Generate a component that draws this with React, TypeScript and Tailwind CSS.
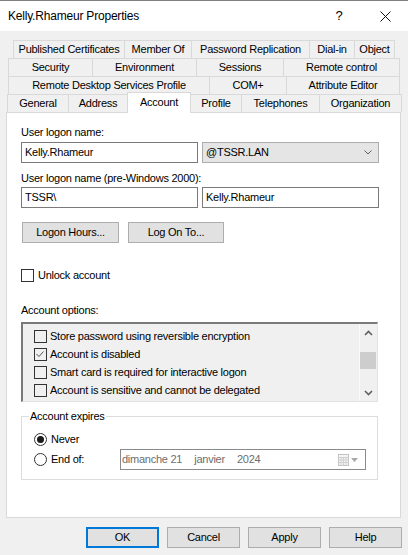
import React from "react";

type Tab = { label: string; w: string; selected?: boolean };

const tabRows: { ml: string; tabs: Tab[] }[] = [
  {
    ml: "ml-[13px]",
    tabs: [
      { label: "Published Certificates", w: "w-[111px]" },
      { label: "Member Of", w: "w-[67px]" },
      { label: "Password Replication", w: "w-[118px]" },
      { label: "Dial-in", w: "w-[45px]" },
      { label: "Object", w: "w-[41px]" },
    ],
  },
  {
    ml: "ml-[8px]",
    tabs: [
      { label: "Security", w: "w-[84px]" },
      { label: "Environment", w: "w-[104px]" },
      { label: "Sessions", w: "w-[87px]" },
      { label: "Remote control", w: "w-[117px]" },
    ],
  },
  {
    ml: "ml-[8px]",
    tabs: [
      { label: "Remote Desktop Services Profile", w: "w-[201px]" },
      { label: "COM+", w: "w-[77px]" },
      { label: "Attribute Editor", w: "w-[114px]" },
    ],
  },
];

const bottomTabs: Tab[] = [
  { label: "General", w: "w-[61px]" },
  { label: "Address", w: "w-[59px]" },
  { label: "Account", w: "w-[64px]", selected: true },
  { label: "Profile", w: "w-[50px]" },
  { label: "Telephones", w: "w-[78px]" },
  { label: "Organization", w: "w-[83px]" },
];

const options = [
  { label: "Store password using reversible encryption", checked: false },
  { label: "Account is disabled", checked: true },
  { label: "Smart card is required for interactive logon", checked: false },
  { label: "Account is sensitive and cannot be delegated", checked: false },
];

function Checkbox({ checked = false }: { checked?: boolean }) {
  return (
    <div className="flex h-[13px] w-[13px] shrink-0 items-center justify-center border border-[#333333]">
      {checked && (
        <svg width="11" height="11" viewBox="0 0 11 11">
          <polyline points="1.5,5 4,7.5 8.5,2.5" fill="none" stroke="#555555" strokeWidth="1" />
        </svg>
      )}
    </div>
  );
}

function Radio({ checked = false }: { checked?: boolean }) {
  return (
    <div className="flex h-[13px] w-[13px] shrink-0 items-center justify-center rounded-full border border-[#333333] bg-white">
      {checked && <div className="h-[7px] w-[7px] rounded-full bg-[#1a1a1a]" />}
    </div>
  );
}

function Chevron({ up = false }: { up?: boolean }) {
  return (
    <svg width="9" height="6" viewBox="0 0 9 6">
      <polyline
        points={up ? "1,5 4.5,1.5 8,5" : "1,1 4.5,4.5 8,1"}
        fill="none"
        stroke="#606060"
        strokeWidth="1.6"
      />
    </svg>
  );
}

export default function App() {
  return (
    <div className="h-[555px] w-[408px] overflow-hidden bg-[#f0f0f0] font-['Liberation_Sans',Arial,sans-serif] text-[11px] tracking-[-0.25px] text-black">
      {/* title bar */}
      <div className="flex h-[31px] items-center border-t border-[#808080] bg-white">
        <span className="flex-1 pl-[8px] text-[12px] tracking-[-0.2px]">Kelly.Rhameur Properties</span>
        <div className="flex h-full w-[46px] items-center justify-center text-[13px]">?</div>
        <div className="flex h-full w-[46px] items-center justify-center">
          <svg width="11" height="11" viewBox="0 0 11 11">
            <path d="M0.5 0.5 L10.5 10.5 M10.5 0.5 L0.5 10.5" stroke="#111111" strokeWidth="1" />
          </svg>
        </div>
      </div>

      {/* tabs */}
      <div className="mt-[9px]">
        {tabRows.map((row, i) => (
          <div key={i} className={`flex ${row.ml}`}>
            {row.tabs.map((t, j) => (
              <div
                key={t.label}
                className={`${t.w} h-[18px] border-t border-l border-[#d9d9d9] text-center leading-[17px] ${
                  j === row.tabs.length - 1 ? "border-r" : ""
                }`}
              >
                {t.label}
              </div>
            ))}
          </div>
        ))}
        <div className="flex h-[18px] items-end ml-[7px]">
          {bottomTabs.map((t, j) => {
            if (t.selected) {
              return (
                <div
                  key={t.label}
                  className={`${t.w} relative z-10 -mb-px h-[21px] border-t border-l border-r border-[#d9d9d9] bg-white text-center leading-[18px]`}
                >
                  {t.label}
                </div>
              );
            }
            const afterSelected = bottomTabs[j - 1]?.selected;
            return (
              <div
                key={t.label}
                className={`${t.w} h-[18px] border-t border-[#d9d9d9] text-center leading-[17px] ${
                  afterSelected ? "" : "border-l"
                } ${j === bottomTabs.length - 1 ? "border-r" : ""}`}
              >
                {t.label}
              </div>
            );
          })}
        </div>
      </div>

      {/* panel */}
      <div className="ml-[6px] h-[406px] w-[395px] border border-[#d9d9d9] bg-white pl-[14px]">
        <div className="mt-[13px] h-[13px] leading-[13px]">User logon name:</div>
        <div className="mt-[3px] flex gap-[4px]">
          <div className="h-[21px] w-[177px] border border-[#7a7a7a] pl-[3px] leading-[19px]">Kelly.Rhameur</div>
          <div className="flex h-[21px] w-[177px] items-center justify-between border border-[#adadad] bg-[#e5e5e5] pl-[3px] pr-[6px]">
            <span>@TSSR.LAN</span>
            <svg width="8" height="5" viewBox="0 0 8 5">
              <polyline points="0.5,0.5 4,4 7.5,0.5" fill="none" stroke="#606060" strokeWidth="1" />
            </svg>
          </div>
        </div>
        <div className="mt-[9px] h-[13px] leading-[13px]">User logon name (pre-Windows 2000):</div>
        <div className="mt-[2px] flex gap-[4px]">
          <div className="h-[21px] w-[177px] border border-[#7a7a7a] pl-[3px] leading-[19px]">TSSR\</div>
          <div className="h-[21px] w-[177px] border border-[#7a7a7a] pl-[3px] leading-[19px]">Kelly.Rhameur</div>
        </div>
        <div className="ml-px mt-[14px] flex gap-[9px]">
          <div className="h-[21px] w-[97px] border border-[#adadad] bg-[#e1e1e1] text-center leading-[19px]">Logon Hours...</div>
          <div className="h-[21px] w-[96px] border border-[#adadad] bg-[#e1e1e1] text-center leading-[19px]">Log On To...</div>
        </div>

        <div className="mt-[26px] flex h-[13px] items-center gap-[4px] bg-white">
          <Checkbox />
          <span className="leading-[13px]">Unlock account</span>
        </div>

        <div className="mt-[22px] h-[13px] leading-[13px]">Account options:</div>
        <div className="mt-[5px] flex h-[80px] w-[357px] border-t-2 border-l-2 border-r border-b border-t-[#7a7a7a] border-l-[#7a7a7a] border-r-[#e3e3e3] border-b-[#e3e3e3] bg-[#f0f0f0]">
          <div className="flex-1 overflow-hidden pl-[11px] pt-[3px]">
            {options.map((o) => (
              <div key={o.label} className="flex h-[18px] items-center gap-[3px]">
                <Checkbox checked={o.checked} />
                <span>{o.label}</span>
              </div>
            ))}
          </div>
          <div className="flex w-[18px] flex-col border-l border-[#fafafa]">
            <div className="flex h-[17px] items-center justify-center">
              <Chevron up />
            </div>
            <div className="h-[11px]" />
            <div className="h-[17px] w-[16px] bg-[#cdcdcd]" />
            <div className="flex-1" />
            <div className="flex h-[17px] items-center justify-center">
              <Chevron />
            </div>
          </div>
        </div>

        <fieldset className="mt-[8px] w-[357px] border border-[#dcdcdc] pb-[9px]">
          <legend className="ml-[7px] px-px leading-[13px]">Account expires</legend>
          <div className="pl-[12px]">
            <div className="mt-[10px] flex h-[13px] items-center gap-[4px]">
              <Radio checked />
              <span>Never</span>
            </div>
            <div className="mt-[3px] flex h-[21px] items-center">
              <div className="flex w-[86px] items-center gap-[4px]">
                <Radio />
                <span>End of:</span>
              </div>
              <div className="flex h-[21px] w-[246px] items-center justify-between border border-[#8a8a8a] pl-[1px] pr-[7px] text-[#6d6d6d]">
                <div className="flex">
                  <span>dimanche 21</span>
                  <span className="ml-[12px]">janvier</span>
                  <span className="ml-[12px]">2024</span>
                </div>
                <div className="flex items-center gap-[2px]">
                  <svg width="11" height="12" viewBox="0 0 11 12">
                    <rect x="0.5" y="0.5" width="10" height="11" fill="#f4f4f4" stroke="#c4c4c4" />
                    <path d="M0.5 3.5 H10.5 M0.5 6 H10.5 M0.5 8.5 H10.5 M3 3.5 V11.5 M5.5 3.5 V11.5 M8 3.5 V11.5" stroke="#d0d0d0" strokeWidth="1" />
                  </svg>
                  <svg width="7" height="4" viewBox="0 0 7 4">
                    <polygon points="0,0 7,0 3.5,4" fill="#a8a8a8" />
                  </svg>
                </div>
              </div>
            </div>
          </div>
        </fieldset>
      </div>

      {/* dialog buttons */}
      <div className="ml-[86px] mt-[9px] flex gap-[8px]">
        <div className="h-[21px] w-[73px] border-2 border-[#0078d7] bg-[#e1e1e1] text-center leading-[17px]">OK</div>
        <div className="h-[21px] w-[73px] border border-[#adadad] bg-[#e1e1e1] text-center leading-[19px]">Cancel</div>
        <div className="h-[21px] w-[73px] border border-[#adadad] bg-[#e1e1e1] text-center leading-[19px]">Apply</div>
        <div className="h-[21px] w-[73px] border border-[#adadad] bg-[#e1e1e1] text-center leading-[19px]">Help</div>
      </div>
    </div>
  );
}
